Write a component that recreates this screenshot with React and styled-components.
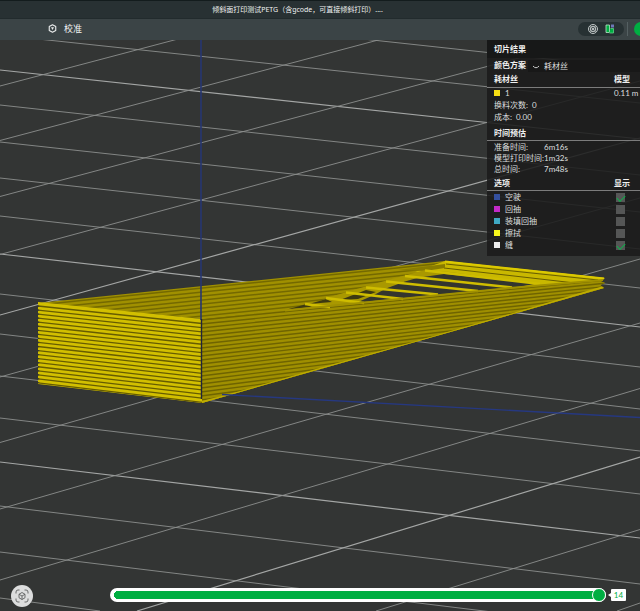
import { useState } from 'react';
import styled, { createGlobalStyle } from 'styled-components';

const GlobalStyle = createGlobalStyle`
  * {
    box-sizing: border-box;
  }

  body {
    margin: 0;
    background-color: #333534;
    color: #dcdede;
    font-family: Lato, 'Noto Sans CJK SC', sans-serif;
    font-size: 8px;
  }

  button, input, select {
    font: inherit;
    color: inherit;
  }
`;

const Page = styled.div`
  display: flex;
  flex-direction: column;
  min-height: 100vh;
  overflow: hidden;
`;

const TitleBar = styled.header`
  height: 19px;
  padding: 0 45px 0 0;
  border-top: 1px solid #131c1d;
  border-bottom: 1px solid #222b2d;
  background-color: #283133;
  display: flex;
  align-items: center;
  justify-content: center;
`;

const Title = styled.h1`
  margin: 0;
  font-family: 'Noto Sans', 'Noto Sans CJK SC', sans-serif;
  font-size: 7px;
  font-weight: 400;
  line-height: 12px;
  color: #f0f2f2;
`;

const Toolbar = styled.nav`
  height: 21px;
  padding-left: 48px;
  background-color: #3b4446;
  display: flex;
  align-items: center;
  justify-content: space-between;
`;

const ToolButton = styled.button`
  display: flex;
  align-items: center;
  gap: 7px;
  padding: 0 0 2px;
  border: none;
  background: none;
  font-size: 9px;
  line-height: 14px;
  color: #f4f5f5;
  cursor: pointer;
`;

const ToolbarRight = styled.div`
  display: flex;
  align-items: center;
  margin: 0 -8px 2px 0;
`;

const ViewSwitch = styled.div`
  display: flex;
  align-items: center;
  justify-content: center;
  gap: 7px;
  width: 46px;
  height: 14px;
  border-radius: 7px;
  background-color: #273133;
`;

const IconButton = styled.button`
  display: flex;
  padding: 0;
  border: none;
  background: none;
  cursor: pointer;
`;

const Divider = styled.span`
  width: 1px;
  height: 14px;
  margin: 0 6px 0 3px;
  background-color: #556062;
`;

const SliceButton = styled.button`
  width: 14px;
  height: 14px;
  padding: 0;
  border: none;
  border-radius: 7px;
  background-color: #00ae42;
  cursor: pointer;
`;

const Viewport = styled.main`
  flex: 1;
  position: relative;
  display: flex;
  flex-direction: column;
  justify-content: space-between;
`;

const SceneSvg = styled.svg`
  position: absolute;
  inset: 0;
  width: 100%;
  height: 100%;
`;

const Panel = styled.aside`
  position: relative;
  align-self: flex-end;
  width: 153px;
  padding-bottom: 5px;
  background-color: rgba(27, 27, 27, 0.88);
  line-height: 11px;
`;

const PanelTitle = styled.h2`
  margin: 0;
  padding: 0 7px;
  font-size: 8px;
  line-height: 18px;
  color: #f0f0f0;
  background-color: #171818;
`;

const SchemeRow = styled.div`
  display: flex;
  align-items: flex-start;
  justify-content: space-between;
  height: 15px;
  padding-left: 7px;
`;

const SchemeLabel = styled.label`
  font-weight: 700;
  line-height: 14px;
  color: #f0f0f0;
`;

const SelectBox = styled.div`
  position: relative;
  width: 112px;
  margin-top: 2px;

  svg {
    position: absolute;
    left: 4px;
    top: 4px;
    pointer-events: none;
  }
`;

const Select = styled.select`
  display: block;
  appearance: none;
  width: 100%;
  height: 12px;
  padding: 0 0 0 16px;
  border: none;
  line-height: 12px;
  background-color: #181818;
`;

const FilamentTable = styled.table`
  width: 100%;
  border-collapse: collapse;

  th, td {
    height: 12px;
    padding: 0;
    text-align: left;
    white-space: nowrap;
  }

  th {
    height: 14px;
    border-bottom: 1px solid #7c7c7c;
    color: #f0f0f0;
  }

  th:first-child, td:first-child {
    padding-left: 7px;
  }

  th:last-child, td:last-child {
    width: 26px;
  }
`;

const Swatch = styled.span`
  display: inline-block;
  width: 6px;
  height: 6px;
  margin-right: 5px;
  background-color: ${props => props.$color};
`;

const Stat = styled.p`
  margin: 0;
  padding: 0 7px;
  line-height: 12px;
`;

const SectionHead = styled.h3`
  display: flex;
  justify-content: space-between;
  margin: ${props => props.$gap}px 0 0;
  padding: 0 10px 0 7px;
  border-bottom: 1px solid #7c7c7c;
  font-size: 8px;
  line-height: 14px;
  color: #f0f0f0;
`;

const TimeList = styled.dl`
  display: grid;
  grid-template-columns: 50px 1fr;
  margin: 0;
  padding: 1px 0 0 7px;

  dt {
    white-space: nowrap;
  }

  dd {
    margin: 0;
  }
`;

const TimeEntry = styled.div`
  display: contents;
`;

const OptionRow = styled.label`
  display: flex;
  align-items: center;
  height: 12px;
  padding: 0 15px 0 7px;
  cursor: pointer;
`;

const OptionName = styled.span`
  flex: 1;
`;

const CheckBox = styled.input`
  appearance: none;
  width: 9px;
  height: 9px;
  margin: 0;
  background-color: #555656;
  display: grid;
  place-items: center;

  &:checked::before {
    content: '';
    width: 7px;
    height: 4px;
    border-left: 1px solid #0cb04a;
    border-bottom: 1px solid #0cb04a;
    transform: rotate(-45deg);
  }
`;

const BottomBar = styled.footer`
  position: relative;
  display: flex;
  align-items: center;
  padding: 0 14px 4px 11px;
`;

const FitButton = styled.button`
  display: flex;
  align-items: center;
  justify-content: center;
  width: 22px;
  height: 22px;
  margin-right: 77px;
  padding: 0;
  border: none;
  border-radius: 50%;
  background-color: #dcdddd;
  cursor: pointer;
`;

const LayerSlider = styled.input`
  appearance: none;
  flex: 1;
  min-width: 0;
  height: 14px;
  margin: 0 5px 2px 0;
  border-radius: 7px;
  background:
    radial-gradient(circle at 8px 7px, #00ae42 4px, transparent 4px),
    linear-gradient(#00ae42, #00ae42) 8px 3px / calc(100% - 12px) 8px no-repeat #fff;

  &::-webkit-slider-thumb {
    appearance: none;
    width: 14px;
    height: 14px;
    border: 1px solid #fff;
    border-radius: 50%;
    background-color: #00ae42;
  }
`;

const LayerTag = styled.output`
  position: relative;
  width: 15px;
  margin-bottom: 2px;
  border-radius: 1px;
  background-color: #fff;
  color: #00ae42;
  font-size: 8px;
  line-height: 12px;
  text-align: center;

  &::before {
    content: '';
    position: absolute;
    left: -3px;
    top: 4px;
    border: 2px solid transparent;
    border-left: none;
    border-right: 3px solid #fff;
  }
`;

// bed grid: [x1, y1, x2, y2, major]
const gridLines = [
  [363, 39, 640, 69],
  [38, 39, 640, 103],
  [0, 70, 640, 139, true],
  [0, 105, 640, 175],
  [0, 142, 640, 212],
  [0, 178, 640, 249],
  [0, 216, 640, 288],
  [0, 254, 640, 327, true],
  [0, 294, 640, 367],
  [0, 334, 640, 409],
  [0, 376, 640, 451],
  [0, 418, 640, 494],
  [0, 462, 640, 538, true],
  [0, 506, 640, 584],
  [0, 552, 640, 630],
  [0, 598, 100, 611],
  [0, 86, 178, 39],
  [0, 140.5, 382, 39],
  [0, 196.5, 590, 39],
  [0, 254.5, 640, 81],
  [0, 315, 640, 138, true],
  [0, 377, 640, 198],
  [0, 442.5, 640, 259],
  [0, 509, 640, 323],
  [0, 580, 640, 388.5],
  [137, 611, 640, 457, true],
  [376, 611, 640, 529.5],
  [617, 611, 640, 603],
];

const ribs = [
  [305, 304, 330, 307],
  [326, 298, 364, 303],
  [346, 292.5, 403, 299],
  [366, 287.5, 438, 294.5],
  [386, 281.5, 478, 291],
  [405, 276, 512, 287.5],
  [425, 270.5, 540, 284],
];

const options = [
  { name: '空驶', color: '#34509f', checked: true },
  { name: '回抽', color: '#c42ac8', checked: false },
  { name: '装填回抽', color: '#3fa9c4', checked: false },
  { name: '擦拭', color: '#f7f71c', checked: false },
  { name: '缝', color: '#ececec', checked: true },
];

const times = [
  ['准备时间:', '6m16s'],
  ['模型打印时间:', '1m32s'],
  ['总时间:', '7m48s'],
];

const range = count => Array.from({ length: count }, (_, i) => i);

const Model = () => (
  <g>
    <clipPath id="side">
      <path d="M38 303 L445 261 L605 278 L600 281 L605 283 L600 285 L604 288 L202 403 V319 Z" />
    </clipPath>
    <clipPath id="front">
      <path d="M38 302 L202 319 V403 L38 384 Z" />
    </clipPath>

    {/* back wall and long side */}
    <g clipPath="url(#side)">
      <rect x="38" y="260" width="570" height="145" fill="#a09000" />
      {range(9).map(i => (
        <line key={i} x1="38" y1={305 + i * 4} x2="450" y2={262.5 + i * 4} stroke="#746900" strokeWidth="1.4" />
      ))}
      <path d="M201 320 L320 306 L510 287 L605 280 V290 L202 404 Z" fill="#9f8f00" />
      {range(24).map(i => (
        <line key={i} x1="201" y1={320 + i * 4} x2="605" y2={280 + i * 3.3} stroke="#6f6400" strokeWidth="1.4" />
      ))}
      <path d="M202 403 L230 396 L320 370 L420 342 L520 313 L604 288" fill="none" stroke="#beac00" strokeWidth="4" />
    </g>

    {/* far short wall */}
    <path d="M445 261 L605 278 L601 280 L520 287 L444 274 L415 272 Z" fill="#c9b800" />
    <path d="M445 261.5 L604 278.5" stroke="#ddca00" strokeWidth="2" />
    <path d="M446 264 L598 280 M444 268 L575 283" stroke="#675d00" strokeWidth="1" />
    <path d="M398 270 L445 264 V268 L425 271 Z" fill="#897c00" />

    {/* open top with ribs */}
    <path d="M300 309 L330 297 L350 291 L388 280 L425 270 L450 272 L537 284 L510 287 L320 306 Z" fill="#a99800" />
    <path d="M357 302.5 L374 295 L386 288.5 L405 281.5 L417 278 L430 276 L444 274 L537 283.5 L521 286.5 L440 294.5 Z" fill="#33352e" />
    <path d="M287 309.5 L305 304.5 L312 307 Z M309 304 L326 299 L332 302 Z M340 300 L366 290 L376 292 L358 299 Z" fill="#3d3912" />
    {ribs.map(([x1, y1, x2, y2]) => (
      <line key={x1} x1={x1} y1={y1} x2={x2} y2={y2} stroke="#cfbd00" strokeWidth="2.4" />
    ))}
    <path d="M285 310.5 L320 307 L510 288 L603 280" fill="none" stroke="#a09000" strokeWidth="1.8" />

    {/* front face */}
    <g clipPath="url(#front)">
      <rect x="38" y="300" width="165" height="105" fill="#d2bf00" />
      {range(20).map(i => (
        <line key={i} x1="38" y1={306 + i * 4.05} x2="202" y2={323.5 + i * 4.15} stroke="#665c00" strokeWidth="1.3" />
      ))}
    </g>
    <path d="M38.5 304 V383" stroke="#333534" strokeWidth="1.4" strokeDasharray="1.3 2.75" strokeDashoffset="-1.4" />
  </g>
);

const Scene = () => (
  <SceneSvg viewBox="0 40 640 571" preserveAspectRatio="xMidYMid slice" aria-hidden="true">
    {gridLines.map(([x1, y1, x2, y2, major], i) => (
      <line
        key={i}
        x1={x1}
        y1={y1}
        x2={x2}
        y2={y2}
        stroke={major ? '#a4a6a5' : '#8c8e8d'}
        strokeWidth={major ? 1.2 : 0.9}
      />
    ))}
    <Model />
    <path d="M201 39 V320" stroke="#263672" strokeWidth="1.6" />
    <path d="M201.5 319 V399" stroke="#20243a" strokeWidth="1.4" />
    <path d="M222 394.5 L640 417.5" stroke="#263880" strokeWidth="1.4" />
  </SceneSvg>
);

const CalibrateIcon = () => (
  <svg width="9" height="9" viewBox="0 0 18 18" fill="none" stroke="#eceeee">
    <path d="M9 1.5 L15.5 5 V13 L9 16.5 L2.5 13 V5 Z" strokeWidth="2.2" strokeLinejoin="round" />
    <path d="M6 6.5 H12 L9 12 Z" fill="#eceeee" stroke="none" />
  </svg>
);

const TargetIcon = () => (
  <svg width="10" height="10" viewBox="0 0 20 20" fill="none" stroke="#d3d8d8" strokeWidth="1.8">
    <circle cx="10" cy="10" r="9" />
    <circle cx="10" cy="10" r="5.5" />
    <circle cx="10" cy="10" r="2" />
    <path d="M4 4 L16 16 M16 4 L4 16" strokeWidth="0.8" />
  </svg>
);

const PlateIcon = () => (
  <svg width="10" height="10" viewBox="0 0 20 20">
    <path d="M2 2 H9 V17 H2 Z" fill="#00ae42" stroke="#b9e4c8" strokeWidth="1.6" />
    <path d="M11 9 H17 V18 H9" fill="#00ae42" stroke="#5fd08a" strokeWidth="1.6" />
    <rect x="12" y="1" width="6" height="6" fill="#6f78b8" />
  </svg>
);

const FitIcon = () => (
  <svg width="14" height="14" viewBox="0 0 28 28" fill="none" stroke="#5d6060" strokeWidth="1.8">
    <path d="M2 9 V6 Q2 2 6 2 H9 M19 2 H22 Q26 2 26 6 V9 M26 19 V22 Q26 26 22 26 H19 M9 26 H6 Q2 26 2 22 V19" />
    <path d="M14 7 L20 10.5 V17.5 L14 21 L8 17.5 V10.5 Z M8 10.5 L14 14 L20 10.5 M14 14 V21" />
  </svg>
);

const ResultPanel = () => {
  const [shown, setShown] = useState(options.map(option => option.checked));

  const toggle = (index) => {
    setShown(shown.map((value, i) => (i === index ? !value : value)));
  };

  return (
    <Panel>
      <PanelTitle>切片结果</PanelTitle>
      <SchemeRow>
        <SchemeLabel htmlFor="scheme">颜色方案</SchemeLabel>
        <SelectBox>
          <Select id="scheme" defaultValue="filament">
            <option value="filament">耗材丝</option>
          </Select>
          <svg width="8" height="6" viewBox="0 0 8 6" fill="none" stroke="#c8caca">
            <path d="M1 2 Q4 5.5 7 2" />
          </svg>
        </SelectBox>
      </SchemeRow>
      <FilamentTable>
        <thead>
          <tr>
            <th>耗材丝</th>
            <th>模型</th>
          </tr>
        </thead>
        <tbody>
          <tr>
            <td><Swatch $color="#f7de13" />1</td>
            <td>0.11 m</td>
          </tr>
        </tbody>
      </FilamentTable>
      <Stat>换料次数:&nbsp; 0</Stat>
      <Stat>成本:&nbsp; 0.00</Stat>
      <SectionHead $gap={3}>时间预估</SectionHead>
      <TimeList>
        {times.map(([label, value]) => (
          <TimeEntry key={label}>
            <dt>{label}</dt>
            <dd>{value}</dd>
          </TimeEntry>
        ))}
      </TimeList>
      <SectionHead $gap={1}>
        <span>选项</span>
        <span>显示</span>
      </SectionHead>
      {options.map((option, i) => (
        <OptionRow key={option.name}>
          <Swatch $color={option.color} />
          <OptionName>{option.name}</OptionName>
          <CheckBox type="checkbox" checked={shown[i]} onChange={() => toggle(i)} />
        </OptionRow>
      ))}
    </Panel>
  );
};

const App = () => {
  const [layer, setLayer] = useState(14);

  return (
    <>
      <GlobalStyle />
      <Page>
        <TitleBar>
          <Title>倾斜面打印测试PETG（含gcode，可直接倾斜打印）....</Title>
        </TitleBar>
        <Toolbar>
          <ToolButton>
            <CalibrateIcon />
            校准
          </ToolButton>
          <ToolbarRight>
            <ViewSwitch>
              <IconButton aria-label="3D"><TargetIcon /></IconButton>
              <IconButton aria-label="预览"><PlateIcon /></IconButton>
            </ViewSwitch>
            <Divider />
            <SliceButton aria-label="切片" />
          </ToolbarRight>
        </Toolbar>
        <Viewport>
          <Scene />
          <ResultPanel />
          <BottomBar>
            <FitButton aria-label="适合视图"><FitIcon /></FitButton>
            <LayerSlider
              id="layer"
              type="range"
              min="1"
              max="14"
              value={layer}
              aria-label="层"
              onChange={(e) => setLayer(Number(e.target.value))}
            />
            <LayerTag htmlFor="layer">{layer}</LayerTag>
          </BottomBar>
        </Viewport>
      </Page>
    </>
  );
};

export default App;
